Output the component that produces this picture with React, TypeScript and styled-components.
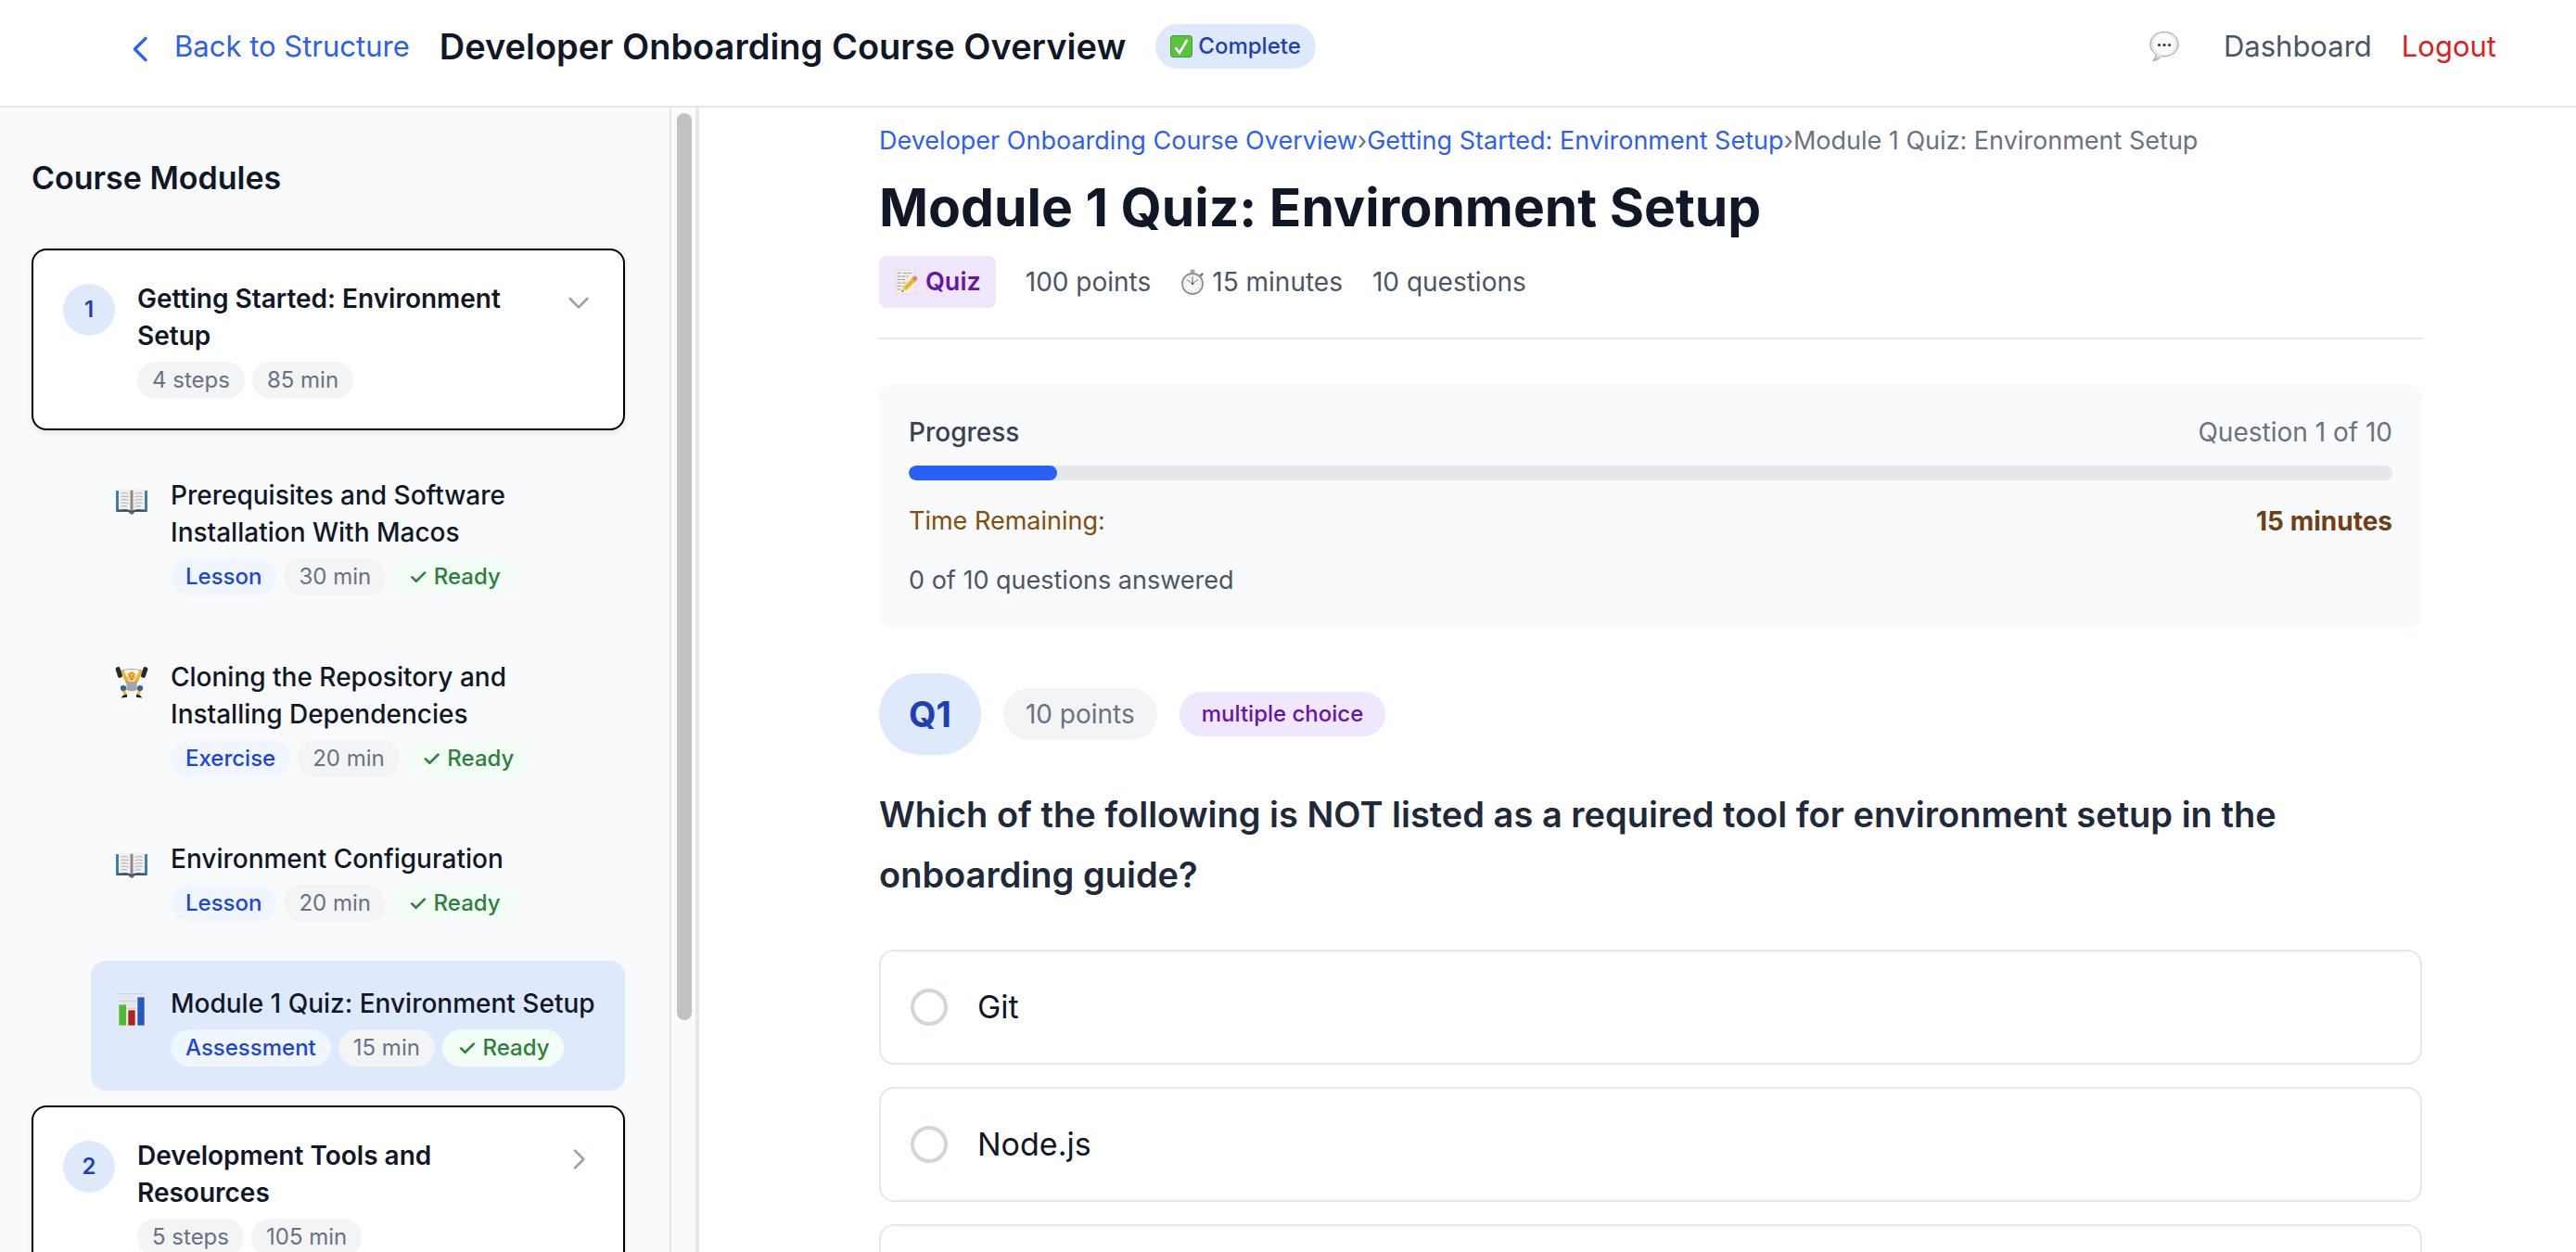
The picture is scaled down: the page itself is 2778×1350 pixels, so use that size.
import React, { useState } from "react";
import styled, { createGlobalStyle, css } from "styled-components";

const color = {
  ink: "#101828",
  heading: "#1e2939",
  text: "#364153",
  body: "#4a5565",
  muted: "#6a7282",
  faint: "#99a1af",
  line: "#e5e7eb",
  surface: "#f9fafb",
  chip: "#f3f4f6",
  blue: "#2b5ff5",
  blueDeep: "#1e3fb5",
  blueSoft: "#dfe9fc",
};

const GlobalStyle = createGlobalStyle`
  *, *::before, *::after { box-sizing: border-box; }
  body {
    margin: 0;
    background: #fff;
    color: ${color.ink};
    font-family: Inter, "Liberation Sans", sans-serif;
    font-size: 28px;
    line-height: 40px;
    -webkit-font-smoothing: antialiased;
  }
  button { font: inherit; color: inherit; background: none; border: 0; padding: 0; cursor: pointer; text-align: left; }
  a { text-decoration: none; }
  h1, h2, h3, p, ul, ol, fieldset { margin: 0; padding: 0; border: 0; }
  ul, ol { list-style: none; }
  svg { display: block; flex: none; }
`;

/* ---------- Page shell ---------- */

const Page = styled.div`
  display: flex;
  flex-direction: column;
  height: 100vh;
  overflow: hidden;
`;

const Header = styled.header`
  display: flex;
  align-items: center;
  justify-content: space-between;
  flex: none;
  padding: 22px 86px 36px 132px;
  border-bottom: 2px solid ${color.line};
`;

const HeaderGroup = styled.div`
  display: flex;
  align-items: center;
  gap: 32px;
`;

const BackLink = styled.a`
  display: flex;
  align-items: center;
  gap: 16px;
  font-size: 31px;
  line-height: 48px;
  color: ${color.blue};

  svg {
    margin-top: 6px;
  }
`;

const CourseTitle = styled.h1`
  font-size: 38px;
  font-weight: 600;
  line-height: 56px;
`;

const StatusPill = styled.span`
  display: flex;
  align-items: center;
  gap: 6px;
  padding: 8px 16px;
  border-radius: 24px;
  background: ${color.blueSoft};
  color: ${color.blueDeep};
  font-size: 24px;
  font-weight: 500;
  line-height: 32px;
`;

const NavControl = styled.button<{ $danger?: boolean }>`
  font-size: 31px;
  line-height: 48px;
  color: ${(p) => (p.$danger ? "#dc1f1f" : color.body)};
`;

const NavLink = styled(NavControl).attrs({ as: "a" })<{ href: string }>``;

const IconButton = styled.button`
  padding: 0 16px;
`;

const Body = styled.div`
  display: flex;
  flex: 1;
  min-height: 0;
`;

/* ---------- Sidebar ---------- */

const Sidebar = styled.aside`
  display: flex;
  flex: none;
  width: 754px;
  border-right: 2px solid ${color.line};
  background: ${color.surface};
`;

const SidebarScroll = styled.nav`
  flex: 1;
  min-width: 0;
  overflow: hidden;
  padding: 48px 48px 0 34px;
`;

const SidebarTitle = styled.h2`
  margin-bottom: 48px;
  font-size: 34px;
  font-weight: 600;
  line-height: 56px;
`;

const ScrollTrack = styled.div`
  flex: none;
  width: 30px;
  padding: 6px;
  border: solid #e8e8e8;
  border-width: 0 2px;
  background: #fafafa;
`;

const ScrollThumb = styled.div`
  width: 16px;
  height: 80%;
  border-radius: 8px;
  background: #c1c1c1;
`;

const ModuleCard = styled.button`
  display: flex;
  align-items: flex-start;
  gap: 24px;
  width: 100%;
  padding: 32px;
  border: 2px solid #000;
  border-radius: 16px;
  background: #fff;
  box-shadow: 0 2px 6px rgba(0, 0, 0, 0.1);

  > svg {
    margin-top: 8px;
  }
`;

const ModuleNumber = styled.span`
  display: flex;
  align-items: center;
  justify-content: center;
  flex: none;
  width: 56px;
  height: 56px;
  margin-top: 4px;
  border-radius: 50%;
  background: ${color.blueSoft};
  color: ${color.blueDeep};
  font-size: 24px;
  font-weight: 600;
`;

const EntryText = styled.span`
  display: flex;
  flex: 1;
  flex-direction: column;
  gap: 8px;
  min-width: 0;
`;

const EntryTitle = styled.span<{ $strong?: boolean }>`
  font-size: 28px;
  font-weight: ${(p) => (p.$strong ? 600 : 500)};
  line-height: 40px;
`;

const ChipRow = styled.span`
  display: flex;
  gap: 8px;
`;

type Tone = "neutral" | "kind" | "ready";

const chipTone = {
  neutral: css`
    background: ${color.chip};
    color: ${color.muted};
  `,
  kind: css`
    background: #eff6ff;
    color: #1d43df;
    font-weight: 500;
  `,
  ready: css`
    background: #f2fdf5;
    color: #2c803c;
    font-weight: 500;
  `,
};

const Chip = styled.span<{ $tone: Tone }>`
  display: flex;
  align-items: center;
  gap: 8px;
  padding: 4px 16px;
  border-radius: 20px;
  font-size: 24px;
  line-height: 32px;
  white-space: nowrap;
  ${(p) => chipTone[p.$tone]}
`;

const StepList = styled.ol`
  display: flex;
  flex-direction: column;
  gap: 16px;
  margin: 24px 0 16px;
  padding-left: 64px;
`;

const StepButton = styled.button<{ $active: boolean }>`
  display: flex;
  align-items: flex-start;
  gap: 24px;
  width: 100%;
  padding: 26px;
  border-radius: 16px;
  background: ${(p) => (p.$active ? color.blueSoft : "transparent")};

  > svg {
    margin-top: 8px;
  }
`;

/* ---------- Main column ---------- */

const Main = styled.main`
  flex: 1;
  min-width: 0;
  overflow: hidden;
  padding: 16px 0 0 28px;
`;

const Column = styled.div`
  max-width: 1792px;
  margin: 0 auto;
  padding: 0 64px;
`;

const Breadcrumb = styled.nav`
  display: flex;
  font-size: 27px;
  color: ${color.muted};

  a {
    color: ${color.blue};
  }
`;

const QuizHeader = styled.header`
  padding-bottom: 32px;
  border-bottom: 2px solid ${color.line};
`;

const QuizTitle = styled.h2`
  margin: 16px 0;
  font-size: 57px;
  font-weight: 700;
  line-height: 72px;
`;

const MetaRow = styled.div`
  display: flex;
  align-items: center;
  gap: 32px;
  color: ${color.body};
`;

const MetaItem = styled.span`
  display: flex;
  align-items: center;
  gap: 8px;
`;

const QuizTag = styled(MetaItem)`
  padding: 8px 16px;
  border-radius: 8px;
  background: #f1e7fd;
  color: #6315b0;
  font-size: 27px;
  font-weight: 600;
`;

const ProgressPanel = styled.section`
  display: flex;
  flex-direction: column;
  gap: 24px;
  margin: 48px 0;
  padding: 32px;
  border-radius: 16px;
  background: ${color.surface};
  color: ${color.body};
  font-size: 27px;
`;

const PanelRow = styled.div`
  display: flex;
  justify-content: space-between;
  color: ${color.muted};
  font-size: 28px;
`;

const ProgressBlock = styled.div`
  display: flex;
  flex-direction: column;
  gap: 16px;
`;

const ProgressLabel = styled.span`
  color: ${color.text};
  font-weight: 500;
`;

const ProgressBar = styled.div`
  height: 16px;
  overflow: hidden;
  border-radius: 8px;
  background: ${color.line};
`;

const ProgressFill = styled.div`
  height: 100%;
  border-radius: 8px;
  background: ${color.blue};
`;

const TimeRow = styled(PanelRow)`
  color: #844d0e;
  font-size: 27px;

  strong {
    color: #6f3f17;
    font-size: 28px;
    font-weight: 700;
  }
`;

const QuestionMeta = styled.div`
  display: flex;
  align-items: center;
  gap: 24px;
  margin-bottom: 32px;
`;

const QuestionNumber = styled.span`
  padding: 16px 32px;
  border-radius: 44px;
  background: ${color.blueSoft};
  color: ${color.blueDeep};
  font-size: 38px;
  font-weight: 700;
  line-height: 56px;
`;

const PointsPill = styled.span`
  padding: 8px 24px;
  border-radius: 28px;
  background: ${color.chip};
  color: ${color.muted};
`;

const TypePill = styled.span`
  padding: 8px 24px;
  border-radius: 24px;
  background: #f1e7fd;
  color: #6315b0;
  font-size: 24px;
  font-weight: 500;
  line-height: 32px;
`;

const QuestionText = styled.h3`
  margin-bottom: 48px;
  color: ${color.heading};
  font-size: 38px;
  font-weight: 600;
  line-height: 65px;
`;

const Options = styled.div`
  display: flex;
  flex-direction: column;
  gap: 24px;
`;

const Option = styled.label`
  display: flex;
  align-items: center;
  gap: 32px;
  min-height: 124px;
  padding: 32px;
  border: 2px solid ${color.line};
  border-radius: 16px;
  font-size: 34px;
  line-height: 56px;
  cursor: pointer;
`;

const Radio = styled.input`
  flex: none;
  width: 40px;
  height: 40px;
  margin: 0;
  appearance: none;
  border: 4px solid #d1d5dc;
  border-radius: 50%;
  background: #fff;

  &:checked {
    border: 12px solid ${color.blue};
  }
`;

/* ---------- Icons ---------- */

const Chevron = ({ d, size, stroke }: { d: string; size: number; stroke: string }) => (
  <svg width={size} height={size} viewBox="0 0 24 24" fill="none" stroke={stroke} strokeWidth="2" strokeLinecap="round" strokeLinejoin="round" aria-hidden="true">
    <path d={d} />
  </svg>
);

const CheckBadge = () => (
  <svg width="24" height="24" viewBox="0 0 24 24" aria-hidden="true">
    <rect width="24" height="24" rx="4" fill="#3fa02c" />
    <rect x="1" y="1" width="22" height="22" rx="3" fill="#5ac43e" />
    <path d="M5.5 13.2 10 19 18.3 5" fill="none" stroke="#fff" strokeWidth="2.6" />
  </svg>
);

const SpeechBubble = () => (
  <svg width="32" height="36" viewBox="0 0 32 36" aria-hidden="true">
    <defs>
      <radialGradient id="bubble" cx="50%" cy="42%" r="58%">
        <stop offset="0.55" stopColor="#ffffff" />
        <stop offset="1" stopColor="#c4c4c4" />
      </radialGradient>
    </defs>
    <path d="M16 2.500C7.200 2.500.800 8 .800 15.800c0 4.500 2.200 8 6 10.300.300 2.800-.900 5.400-3 7.400 4.200-.200 7.300-2.200 9.200-5C23.500 29.900 31.200 24 31.200 15.800 31.200 8 24.800 2.500 16 2.500Z" fill="url(#bubble)" stroke="#a8a8a8" strokeWidth="1" />
    <circle cx="10.500" cy="16.500" r="1.600" fill="#333" />
    <circle cx="16" cy="16.500" r="1.600" fill="#333" />
    <circle cx="21.500" cy="16.500" r="1.600" fill="#333" />
  </svg>
);

const BookIcon = () => (
  <svg width="36" height="36" viewBox="0 0 36 36" aria-hidden="true">
    <path d="M1 7h34v23H21l-1 2h-4l-1-2H1Z" fill="#3f7fae" />
    <path d="M3 27.500h30v2H21l-1.500 1.500h-3L15 29.500H3Z" fill="#4a4a4c" />
    <path d="M4 6c5-1.400 10-1.400 14 .8C22 4.600 27 4.600 32 6v21.500c-5-1-10-.8-14 1-4-1.800-9-2-14-1Z" fill="#f1f0ef" />
    <path d="M16.500 6.200 18 7l1.500-.8v21.600l-1.500.7-1.500-.7Z" fill="#8b8b8b" />
    <path d="M6.500 10c3-.6 5.500-.5 8 .4M6.500 13.500c3-.6 5.500-.5 8 .4M6.500 17c3-.6 5.500-.5 8 .4M6.500 20.500c3-.6 5.500-.5 8 .4M6.500 24c3-.6 5-.5 6.500 0M21.500 10.400c2.500-.9 5-1 8-.4M21.500 13.900c2.500-.9 5-1 8-.4M21.500 17.400c2.500-.9 5-1 8-.4M21.500 20.900c2.500-.9 5-1 8-.4M21.500 24.400c2.500-.9 4-1 6.500-.4" fill="none" stroke="#a9a9ab" strokeWidth="1" />
    <path d="M16.500 30h3l-.5 2.500h-2Z" fill="#7a6a3a" />
  </svg>
);

const LifterIcon = () => (
  <svg width="36" height="36" viewBox="0 0 36 36" aria-hidden="true">
    <path d="M4 6C13 2.800 23 2.800 32 6" fill="none" stroke="#9a9a9a" strokeWidth="1.200" />
    <path d="M8.500 6.500 13 17M27.500 6.500 23 17" stroke="#f2b32c" strokeWidth="3.600" strokeLinecap="round" />
    <path d="M13 25 8.500 23.500 11 31M23 25l4.500-1.500L25 31" fill="none" stroke="#f2b32c" strokeWidth="3.400" strokeLinejoin="round" />
    <path d="M12 14.500 15 17h6l3-2.500L23 26c-2.500 1.800-7.500 1.800-10 0Z" fill="#a3a5aa" />
    <ellipse cx="18" cy="11.500" rx="4.400" ry="5.300" fill="#fbc63a" />
    <path d="M13.800 10.500c0-5 8.400-5 8.400 0-2.500-2-6-2-8.400 0Z" fill="#e3981e" />
    <path d="M15.800 13.600c1.400 1.500 3 1.500 4.400 0Z" fill="#7e4a12" />
    <circle cx="16.400" cy="11.300" r=".7" fill="#5c3a12" />
    <circle cx="19.600" cy="11.300" r=".7" fill="#5c3a12" />
    <ellipse cx="9" cy="24" rx="3.200" ry="3" fill="#2f62ad" />
    <ellipse cx="27" cy="24" rx="3.200" ry="3" fill="#2f62ad" />
    <path d="M7 34.500c.5-2.500 3-3.500 6-3.700v2.900ZM29 34.500c-.5-2.500-3-3.500-6-3.700v2.900Z" fill="#1d1d1f" />
    <rect x="1.800" y="1" width="5" height="12" rx="2" transform="rotate(-18 4.300 7)" fill="#26282b" />
    <rect x="29.200" y="1" width="5" height="12" rx="2" transform="rotate(18 31.700 7)" fill="#26282b" />
  </svg>
);

const ChartIcon = () => (
  <svg width="36" height="36" viewBox="0 0 36 36" aria-hidden="true">
    <rect x="3" y="1" width="30" height="35" fill="#e3e8f0" />
    <path d="M3 1.500h30M3 9.500h30M3 17.500h30" stroke="#ccd2db" strokeWidth="1" />
    <rect x="4" y="13" width="8.500" height="23" fill="#52b934" stroke="#fff" strokeWidth=".6" />
    <rect x="14" y="19" width="8" height="17" fill="#b0221b" stroke="#fff" strokeWidth=".6" />
    <rect x="24" y="5" width="8" height="31" fill="#2358bd" stroke="#fff" strokeWidth=".6" />
  </svg>
);

const MemoIcon = () => (
  <svg width="26" height="28" viewBox="0 0 26 28" aria-hidden="true">
    <rect x="1" y="1" width="22" height="26" fill="#efeeec" stroke="#d5d3d0" strokeWidth=".6" />
    <path d="M3.500 4.500h5M10 4.500h9M3.500 8h12M3.500 11.500h8M3.500 15h9M3.500 18.500h6M3.500 22h5" stroke="#98969a" strokeWidth="1.200" strokeDasharray="4 1" />
    <path d="m10 19.500 11-11 3.500 3.500-11 11-5 1.700Z" fill="#f4bd2e" />
    <path d="m12 21.300 11-11" stroke="#d9951c" strokeWidth="1" />
    <path d="m19.500 10 2-2.200c1.500-1 4.500 1.500 3.700 3.500l-2.200 2.200Z" fill="#e87b7b" />
    <path d="m10 19.500 3.500 3.500-5 1.700Z" fill="#e9cfa4" />
    <path d="m9 22.800 1.200 1.300-1.900.7Z" fill="#333" />
  </svg>
);

const StopwatchIcon = () => (
  <svg width="26" height="28" viewBox="0 0 26 28" aria-hidden="true">
    <rect x="10.500" y=".5" width="5" height="4" rx="1" fill="#a5a8ac" />
    <path d="m21 8 2.500-2.500" stroke="#6d7075" strokeWidth="2.400" strokeLinecap="round" />
    <circle cx="13" cy="16" r="11" fill="#fafafa" stroke="#8d9196" strokeWidth="1.800" />
    <circle cx="13" cy="16" r="8" fill="none" stroke="#b8bbc0" strokeWidth="1.600" strokeDasharray=".8 3.390" />
    <path d="m13 16-6-4.500M13 16l6-4.500" stroke="#c4574c" strokeWidth="1" />
    <path d="M13 8.500V16" stroke="#55585c" strokeWidth="1" />
    <circle cx="13" cy="16" r="1.200" fill="#55585c" />
  </svg>
);

/* ---------- Data ---------- */

const steps = [
  { title: "Prerequisites and Software Installation With Macos", kind: "Lesson", time: "30 min", Icon: BookIcon },
  { title: "Cloning the Repository and Installing Dependencies", kind: "Exercise", time: "20 min", Icon: LifterIcon },
  { title: "Environment Configuration", kind: "Lesson", time: "20 min", Icon: BookIcon },
  { title: "Module 1 Quiz: Environment Setup", kind: "Assessment", time: "15 min", Icon: ChartIcon },
];

const options = ["Git", "Node.js", ""];

const DOWN = "m19 9-7 7-7-7";
const RIGHT = "m9 5 7 7-7 7";
const LEFT = "m15 19-7-7 7-7";

interface ModuleProps {
  number: number;
  title: string;
  count: string;
  time: string;
  open: boolean;
  onToggle?: () => void;
}

const Module = ({ number, title, count, time, open, onToggle }: ModuleProps) => (
  <ModuleCard type="button" aria-expanded={open} onClick={onToggle}>
    <ModuleNumber>{number}</ModuleNumber>
    <EntryText>
      <EntryTitle $strong>{title}</EntryTitle>
      <ChipRow>
        <Chip $tone="neutral">{count}</Chip>
        <Chip $tone="neutral">{time}</Chip>
      </ChipRow>
    </EntryText>
    <Chevron d={open ? DOWN : RIGHT} size={32} stroke={color.faint} />
  </ModuleCard>
);

export default function App() {
  const [open, setOpen] = useState(true);
  const [active, setActive] = useState(3);
  const [answer, setAnswer] = useState<number | null>(null);
  const current = 1;
  const total = 10;

  return (
    <Page>
      <GlobalStyle />
      <Header>
        <HeaderGroup>
          <BackLink href="#structure">
            <Chevron d={LEFT} size={40} stroke={color.blue} />
            Back to Structure
          </BackLink>
          <CourseTitle>Developer Onboarding Course Overview</CourseTitle>
          <StatusPill>
            <CheckBadge />
            Complete
          </StatusPill>
        </HeaderGroup>
        <HeaderGroup>
          <IconButton type="button" aria-label="Feedback">
            <SpeechBubble />
          </IconButton>
          <NavLink href="#dashboard">Dashboard</NavLink>
          <NavControl type="button" $danger>
            Logout
          </NavControl>
        </HeaderGroup>
      </Header>

      <Body>
        <Sidebar>
          <SidebarScroll aria-label="Course Modules">
            <SidebarTitle>Course Modules</SidebarTitle>
            <Module number={1} title="Getting Started: Environment Setup" count="4 steps" time="85 min" open={open} onToggle={() => setOpen(!open)} />
            {open && (
              <StepList>
                {steps.map(({ title, kind, time, Icon }, i) => (
                  <li key={title}>
                    <StepButton type="button" $active={i === active} onClick={() => setActive(i)}>
                      <Icon />
                      <EntryText>
                        <EntryTitle>{title}</EntryTitle>
                        <ChipRow>
                          <Chip $tone="kind">{kind}</Chip>
                          <Chip $tone="neutral">{time}</Chip>
                          <Chip $tone="ready">✓ Ready</Chip>
                        </ChipRow>
                      </EntryText>
                    </StepButton>
                  </li>
                ))}
              </StepList>
            )}
            <Module number={2} title="Development Tools and Resources" count="5 steps" time="105 min" open={false} />
          </SidebarScroll>
          <ScrollTrack aria-hidden="true">
            <ScrollThumb />
          </ScrollTrack>
        </Sidebar>

        <Main>
          <Column>
            <QuizHeader>
              <Breadcrumb aria-label="Breadcrumb">
                <a href="#course">Developer Onboarding Course Overview</a>
                <span>›</span>
                <a href="#module">Getting Started: Environment Setup</a>
                <span>›</span>
                <span>Module 1 Quiz: Environment Setup</span>
              </Breadcrumb>
              <QuizTitle>Module 1 Quiz: Environment Setup</QuizTitle>
              <MetaRow>
                <QuizTag>
                  <MemoIcon />
                  Quiz
                </QuizTag>
                <MetaItem>100 points</MetaItem>
                <MetaItem>
                  <StopwatchIcon />
                  15 minutes
                </MetaItem>
                <MetaItem>10 questions</MetaItem>
              </MetaRow>
            </QuizHeader>

            <ProgressPanel>
              <ProgressBlock>
                <PanelRow>
                  <ProgressLabel id="progress-label">Progress</ProgressLabel>
                  <span>
                    Question {current} of {total}
                  </span>
                </PanelRow>
                <ProgressBar role="progressbar" aria-labelledby="progress-label" aria-valuenow={current} aria-valuemax={total}>
                  <ProgressFill style={{ width: `${(current / total) * 100}%` }} />
                </ProgressBar>
              </ProgressBlock>
              <TimeRow>
                <span>Time Remaining:</span>
                <strong>15 minutes</strong>
              </TimeRow>
              <p>0 of {total} questions answered</p>
            </ProgressPanel>

            <QuestionMeta>
              <QuestionNumber>Q1</QuestionNumber>
              <PointsPill>10 points</PointsPill>
              <TypePill>multiple choice</TypePill>
            </QuestionMeta>
            <QuestionText id="question">
              Which of the following is NOT listed as a required tool for environment setup in the onboarding guide?
            </QuestionText>
            <Options role="radiogroup" aria-labelledby="question">
              {options.map((label, i) => (
                <Option key={i}>
                  <Radio type="radio" name="answer" aria-label={label || `Option ${i + 1}`} checked={answer === i} onChange={() => setAnswer(i)} />
                  {label}
                </Option>
              ))}
            </Options>
          </Column>
        </Main>
      </Body>
    </Page>
  );
}
